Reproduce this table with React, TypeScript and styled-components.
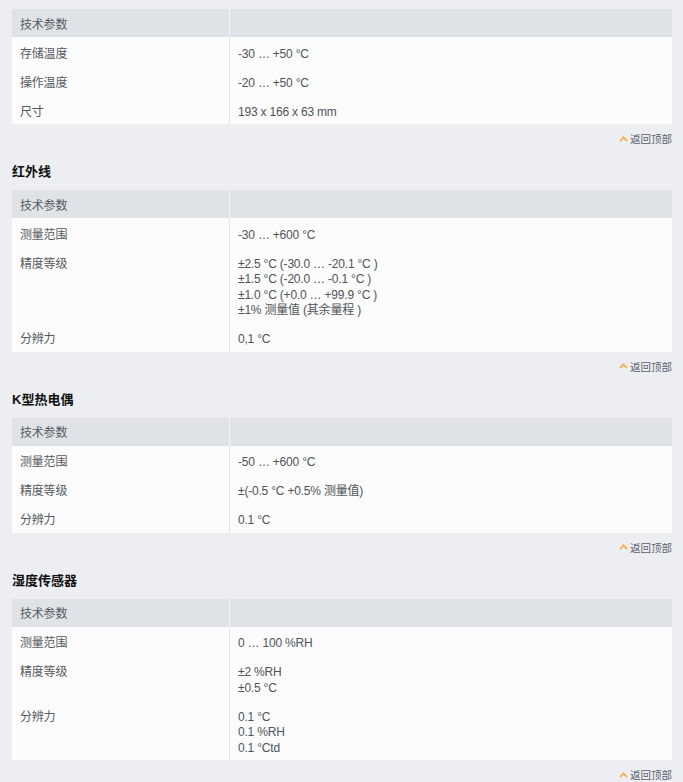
import { createGlobalStyle, styled } from "styled-components";

interface Spec {
    label: string;
    values: string[];
}

interface Section {
    title?: string;
    rows: Spec[];
}

const sections: Section[] = [
    {
        rows: [
            { label: "存储温度", values: ["-30 … +50 °C"] },
            { label: "操作温度", values: ["-20 … +50 °C"] },
            { label: "尺寸", values: ["193 x 166 x 63 mm"] },
        ],
    },
    {
        title: "红外线",
        rows: [
            { label: "测量范围", values: ["-30 … +600 °C"] },
            {
                label: "精度等级",
                values: [
                    "±2.5 °C (-30.0 … -20.1 °C )",
                    "±1.5 °C (-20.0 … -0.1 °C )",
                    "±1.0 °C (+0.0 … +99.9 °C )",
                    "±1% 测量值 (其余量程 )",
                ],
            },
            { label: "分辨力", values: ["0,1 °C"] },
        ],
    },
    {
        title: "K型热电偶",
        rows: [
            { label: "测量范围", values: ["-50 … +600 °C"] },
            { label: "精度等级", values: ["±(-0.5 °C +0.5% 测量值)"] },
            { label: "分辨力", values: ["0.1 °C"] },
        ],
    },
    {
        title: "湿度传感器",
        rows: [
            { label: "测量范围", values: ["0 … 100 %RH"] },
            { label: "精度等级", values: ["±2 %RH", "±0.5 °C"] },
            { label: "分辨力", values: ["0.1 °C", "0.1 %RH", "0.1 °Ctd"] },
        ],
    },
];

export default function App() {
    return (
        <>
            <GlobalStyle />
            <Page>
                {sections.map((section, i) => (
                    <Block key={i}>
                        {section.title && <Title>{section.title}</Title>}
                        <SpecTable>
                            <HeadRow>
                                <HeadCell>技术参数</HeadCell>
                                <HeadCell />
                            </HeadRow>
                            {section.rows.map((row) => (
                                <Row key={row.label}>
                                    <LabelCell>{row.label}</LabelCell>
                                    <ValueCell>
                                        {row.values.map((v) => (
                                            <div key={v}>{v}</div>
                                        ))}
                                    </ValueCell>
                                </Row>
                            ))}
                        </SpecTable>
                        <BackTop href="#">
                            <svg width="9" height="6" viewBox="0 0 9 6">
                                <path
                                    d="M1 5.2 L4.5 1.3 L8 5.2"
                                    fill="none"
                                    stroke="#f0b252"
                                    strokeWidth="1.8"
                                />
                            </svg>
                            返回顶部
                        </BackTop>
                    </Block>
                ))}
            </Page>
        </>
    );
}

const GlobalStyle = createGlobalStyle`
    html, body {
        margin: 0;
        padding: 0;
        background: #eceef1;
        overflow: hidden;
    }
    body {
        font-family: "Liberation Sans", Arial, "Noto Sans CJK SC", sans-serif;
        font-size: 12px;
        color: #555a60;
    }
`;

const Page = styled.div`
    padding: 9px 11px 0 12px;
`;

const Block = styled.section`
    display: flex;
    flex-direction: column;
`;

const Title = styled.h3`
    margin: 15px 0 8px;
    font-size: 13px;
    line-height: 20px;
    font-weight: bold;
    color: #111;
`;

const SpecTable = styled.div`
    background: #fcfcfc;
    letter-spacing: -0.2px;
`;

const Row = styled.div`
    display: grid;
    grid-template-columns: 218px 1fr;
`;

const HeadRow = styled(Row)`
    height: 28px;
    background: #dfe3e7;
    grid-template-columns: 217px 1px 1fr;
    &::before {
        content: "";
        grid-column: 2;
        grid-row: 1;
        background: #f4f5f7;
    }
`;

const HeadCell = styled.div`
    display: flex;
    align-items: center;
    padding: 0 8px;
    &:nth-child(2) {
        grid-column: 3;
    }
`;

const LabelCell = styled.div`
    padding: 9.5px 8px 4px;
    line-height: 15.5px;
    border-right: 1px solid #e2e5e9;
`;

const ValueCell = styled.div`
    padding: 9.5px 8px 4px;
    line-height: 15.5px;
    color: #4f5358;
`;

const BackTop = styled.a`
    align-self: flex-end;
    display: flex;
    align-items: center;
    gap: 2px;
    margin-top: 6px;
    height: 17px;
    font-size: 10.5px;
    color: #59616d;
    text-decoration: none;
`;
